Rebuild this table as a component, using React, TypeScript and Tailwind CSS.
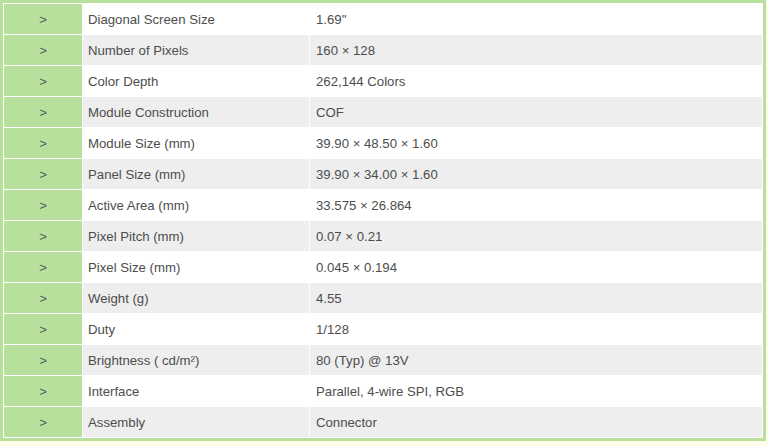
const specs: [string, string][] = [
  ["Diagonal Screen Size", '1.69"'],
  ["Number of Pixels", "160 × 128"],
  ["Color Depth", "262,144 Colors"],
  ["Module Construction", "COF"],
  ["Module Size (mm)", "39.90 × 48.50 × 1.60"],
  ["Panel Size (mm)", "39.90 × 34.00 × 1.60"],
  ["Active Area (mm)", "33.575 × 26.864"],
  ["Pixel Pitch (mm)", "0.07 × 0.21"],
  ["Pixel Size (mm)", "0.045 × 0.194"],
  ["Weight (g)", "4.55"],
  ["Duty", "1/128"],
  ["Brightness ( cd/m²)", "80 (Typ) @ 13V"],
  ["Interface", "Parallel, 4-wire SPI, RGB"],
  ["Assembly", "Connector"],
];

export default function App() {
  return (
    <div className="w-[768px] h-[446px] bg-[#fdfdea] font-['Liberation_Sans',Arial,sans-serif] text-[13.2px] text-[#4d4d4d]">
      <div className="w-[766px] border-[3px] border-[#b6e09b] bg-white p-px">
        <div className="grid grid-cols-[78px_226px_1fr] gap-px">
          {specs.map(([label, value], i) => {
            const bg = i % 2 === 0 ? "bg-white" : "bg-[#eeeeee]";
            return (
              <div key={label} className="contents">
                <div className="h-[30px] pt-px flex items-center justify-center bg-[#b6e09b] text-[#5a5a5a]">&gt;</div>
                <div className={`h-[30px] pt-px flex items-center pl-[5px] ${bg}`}>{label}</div>
                <div className={`h-[30px] pt-px flex items-center pl-[6px] ${bg}`}>{value}</div>
              </div>
            );
          })}
        </div>
      </div>
    </div>
  );
}
